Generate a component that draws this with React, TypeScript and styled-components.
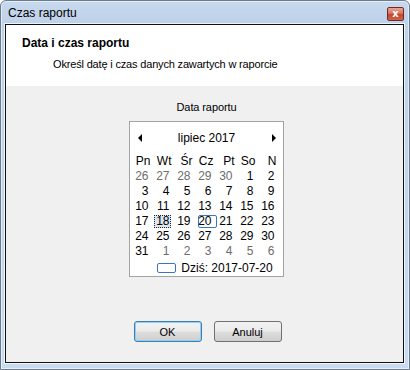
import React from "react";
import styled, { createGlobalStyle, css } from "styled-components";

const Global = createGlobalStyle`
  html, body { margin: 0; padding: 0; background: #ffffff; }
  body { font-family: "Liberation Sans", Arial, sans-serif; font-size: 11px; color: #000; }
`;

const Window = styled.div`
  width: 410px;
  height: 370px;
  box-sizing: border-box;
  border: 1px solid #6c7c8f;
  border-radius: 6px 6px 0 0;
  background: linear-gradient(to bottom, #c7d9ee 0px, #bdd1e9 23px, #c3d6ec 60%, #c9dbef 100%);
  display: flex;
  flex-direction: column;
  padding: 0 5px 6px 4px;
  box-shadow: inset 0 0 0 1px rgba(255, 255, 255, 0.55);
`;

const TitleBar = styled.div`
  height: 23px;
  display: flex;
  align-items: center;
  justify-content: space-between;
  padding-left: 3px;
`;

const TitleText = styled.span`
  font-size: 12px;
  color: #000;
  margin-top: 1px;
`;

const CloseButton = styled.div`
  width: 15px;
  height: 12px;
  margin: 3px 0 0 0;
  border: 1px solid #6e2b22;
  border-radius: 2px;
  background: linear-gradient(to bottom, #eaa594 0%, #d8735c 45%, #c2472f 55%, #d0634a 100%);
  display: flex;
  align-items: center;
  justify-content: center;
  color: #fff;
  font-family: "DejaVu Sans", sans-serif;
  font-weight: bold;
  font-size: 10px;
  line-height: 1;
`;

const Client = styled.div`
  flex: 1;
  border: 1px solid #101010;
  box-shadow: 0 0 0 1px rgba(255, 255, 255, 0.75);
  background: #f0f0f0;
  display: flex;
  flex-direction: column;
`;

const Header = styled.div`
  height: 61px;
  background: #ffffff;
  box-sizing: border-box;
  padding: 11px 0 0 16px;
`;

const HeaderTitle = styled.div`
  font-weight: bold;
  font-size: 12px;
  line-height: 14px;
`;

const HeaderSub = styled.div`
  margin: 7px 0 0 31px;
  font-size: 11px;
  line-height: 14px;
  letter-spacing: -0.17px;
`;

const Body = styled.div`
  flex: 1;
  display: flex;
  flex-direction: column;
  align-items: center;
  padding-top: 14px;
`;

const Label = styled.div`
  line-height: 14px;
  margin-bottom: 7px;
  margin-left: 4px;
  letter-spacing: -0.1px;
`;

const Calendar = styled.div`
  width: 153px;
  margin-left: 3px;
  background: #fff;
  border: 1px solid #a3a3a3;
  padding: 4px 0 1px 0;
  display: flex;
  flex-direction: column;
`;

const MonthRow = styled.div`
  height: 24px;
  display: flex;
  align-items: center;
  justify-content: space-between;
  padding: 0 7px 0 8px;
  margin-bottom: 4px;
`;

const Arrow = styled.div<{ $dir: "left" | "right" }>`
  width: 0;
  height: 0;
  border-top: 4px solid transparent;
  border-bottom: 4px solid transparent;
  ${(p) =>
    p.$dir === "left"
      ? css`border-right: 4px solid #000;`
      : css`border-left: 4px solid #000;`}
`;

const MonthTitle = styled.span`
  font-size: 12px;
`;

const Grid = styled.div`
  display: grid;
  grid-template-columns: repeat(7, 21px);
  grid-auto-rows: 15px;
  margin-left: 3px;
`;

const Cell = styled.div<{ $muted?: boolean; $head?: boolean }>`
  position: relative;
  text-align: right;
  padding-right: 5px;
  font-size: 12px;
  line-height: 15px;
  color: ${(p) => (p.$muted ? "#6d6d6d" : "#000")};
  ${(p) => p.$head && css`padding-right: 3px;`}
`;

const CellText = styled.span`
  position: relative;
  z-index: 1;
`;

const TodayBox = styled.span`
  position: absolute;
  left: 2px;
  right: 0;
  top: 1px;
  height: 11px;
  border: 1px solid #3a76bf;
  border-radius: 2px;
`;

const FocusBox = styled.span`
  position: absolute;
  left: 0;
  width: 15px;
  top: 1px;
  height: 11px;
  border: 1px dotted #222;
  background: #dbe6f3;
`;

const TodayRow = styled.div`
  height: 15px;
  margin-top: 1px;
  display: flex;
  align-items: center;
  justify-content: center;
  padding-left: 18px;
  gap: 5px;
  font-size: 12px;
`;

const TodaySwatch = styled.span`
  width: 17px;
  height: 8px;
  border: 1px solid #3a76bf;
  border-radius: 2px;
`;

const Buttons = styled.div`
  margin-top: 44px;
  margin-left: 6px;
  display: flex;
  gap: 12px;
`;

const Button = styled.button<{ $default?: boolean }>`
  width: 68px;
  height: 21px;
  box-sizing: border-box;
  border: 1px solid #707070;
  border-radius: 3px;
  background: linear-gradient(to bottom, #f2f2f2 0%, #ebebeb 48%, #dddddd 52%, #cfcfcf 100%);
  font-family: "Liberation Sans", Arial, sans-serif;
  font-size: 11px;
  color: #000;
  padding: 0;
  ${(p) =>
    p.$default &&
    css`
      border-color: #3c7fb1;
      box-shadow: inset 0 0 0 1px #8fd0f5;
    `}
`;

const heads = ["Pn", "Wt", "Śr", "Cz", "Pt", "So", "N"];

type Day = { n: number; muted?: boolean; today?: boolean; focus?: boolean };

const days: Day[] = [
  ...[26, 27, 28, 29, 30].map((n) => ({ n, muted: true })),
  ...Array.from({ length: 31 }, (_, i) => ({
    n: i + 1,
    today: i + 1 === 20,
    focus: i + 1 === 18,
  })),
  ...[1, 2, 3, 4, 5, 6].map((n) => ({ n, muted: true })),
];

export default function App() {
  return (
    <>
      <Global />
      <Window>
        <TitleBar>
          <TitleText>Czas raportu</TitleText>
          <CloseButton>x</CloseButton>
        </TitleBar>
        <Client>
          <Header>
            <HeaderTitle>Data i czas raportu</HeaderTitle>
            <HeaderSub>Określ datę i czas danych zawartych w raporcie</HeaderSub>
          </Header>
          <Body>
            <Label>Data raportu</Label>
            <Calendar>
              <MonthRow>
                <Arrow $dir="left" />
                <MonthTitle>lipiec 2017</MonthTitle>
                <Arrow $dir="right" />
              </MonthRow>
              <Grid>
                {heads.map((h) => (
                  <Cell key={h} $head>
                    {h}
                  </Cell>
                ))}
                {days.map((d, i) => (
                  <Cell key={i} $muted={d.muted}>
                    {d.today && <TodayBox />}
                    {d.focus && <FocusBox />}
                    <CellText>{d.n}</CellText>
                  </Cell>
                ))}
              </Grid>
              <TodayRow>
                <TodaySwatch />
                <span>Dziś: 2017-07-20</span>
              </TodayRow>
            </Calendar>
            <Buttons>
              <Button $default>OK</Button>
              <Button>Anuluj</Button>
            </Buttons>
          </Body>
        </Client>
      </Window>
    </>
  );
}
